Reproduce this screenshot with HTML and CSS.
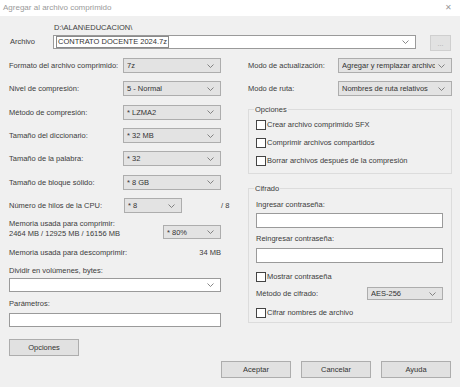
FILE: index.html
```html
<!DOCTYPE html>
<html lang="es">
<head>
    <meta charset="UTF-8">
    <title>Agregar al archivo comprimido</title>
    <link rel="stylesheet" href="styles.css">
</head>
<body>
    <div class="window">
        <div class="titlebar">
            <span class="title">Agregar al archivo comprimido</span>
            <span class="close">✕</span>
        </div>

        <div class="content">
            <!-- archivo -->
            <div class="file-row">
                <span class="file-label">Archivo</span>
                <div class="file-path">
                    <div class="path-text">D:\ALAN\EDUCACION\</div>
                    <div class="combo edit">
                        <span class="value">CONTRATO DOCENTE 2024.7z</span>
                        <svg class="chev" width="7" height="4" viewBox="0 0 7 4"><polyline points="0.5,0.5 3.5,3.5 6.5,0.5"/></svg>
                    </div>
                </div>
                <button class="browse" disabled>...</button>
            </div>

            <div class="columns">
                <!-- columna izquierda -->
                <div class="col-left">
                    <div class="row">
                        <span class="label">Formato del archivo comprimido:</span>
                        <div class="combo sel left-sel"><span class="value">7z</span><svg class="chev" width="7" height="4" viewBox="0 0 7 4"><polyline points="0.5,0.5 3.5,3.5 6.5,0.5"/></svg></div>
                    </div>
                    <div class="row">
                        <span class="label">Nivel de compresión:</span>
                        <div class="combo sel left-sel"><span class="value">5 - Normal</span><svg class="chev" width="7" height="4" viewBox="0 0 7 4"><polyline points="0.5,0.5 3.5,3.5 6.5,0.5"/></svg></div>
                    </div>
                    <div class="row">
                        <span class="label">Método de compresión:</span>
                        <div class="combo sel left-sel"><span class="value">* LZMA2</span><svg class="chev" width="7" height="4" viewBox="0 0 7 4"><polyline points="0.5,0.5 3.5,3.5 6.5,0.5"/></svg></div>
                    </div>
                    <div class="row">
                        <span class="label">Tamaño del diccionario:</span>
                        <div class="combo sel left-sel"><span class="value">* 32 MB</span><svg class="chev" width="7" height="4" viewBox="0 0 7 4"><polyline points="0.5,0.5 3.5,3.5 6.5,0.5"/></svg></div>
                    </div>
                    <div class="row">
                        <span class="label">Tamaño de la palabra:</span>
                        <div class="combo sel left-sel"><span class="value">* 32</span><svg class="chev" width="7" height="4" viewBox="0 0 7 4"><polyline points="0.5,0.5 3.5,3.5 6.5,0.5"/></svg></div>
                    </div>
                    <div class="row">
                        <span class="label">Tamaño de bloque sólido:</span>
                        <div class="combo sel left-sel"><span class="value">* 8 GB</span><svg class="chev" width="7" height="4" viewBox="0 0 7 4"><polyline points="0.5,0.5 3.5,3.5 6.5,0.5"/></svg></div>
                    </div>
                    <div class="row">
                        <span class="label">Número de hilos de la CPU:</span>
                        <div class="combo sel threads-sel"><span class="value">* 8</span><svg class="chev" width="7" height="4" viewBox="0 0 7 4"><polyline points="0.5,0.5 3.5,3.5 6.5,0.5"/></svg></div>
                        <span class="threads-max">/ 8</span>
                    </div>

                    <div class="mem-row">
                        <div class="mem-text">
                            <div>Memoria usada para comprimir:</div>
                            <div>2464 MB / 12925 MB / 16156 MB</div>
                        </div>
                        <div class="combo sel mem-sel"><span class="value">* 80%</span><svg class="chev" width="7" height="4" viewBox="0 0 7 4"><polyline points="0.5,0.5 3.5,3.5 6.5,0.5"/></svg></div>
                    </div>
                    <div class="decomp-row">
                        <span>Memoria usada para descomprimir:</span>
                        <span>34 MB</span>
                    </div>

                    <div class="field-label split-label">Dividir en volúmenes, bytes:</div>
                    <div class="combo edit full"><span class="value"></span><svg class="chev" width="7" height="4" viewBox="0 0 7 4"><polyline points="0.5,0.5 3.5,3.5 6.5,0.5"/></svg></div>

                    <div class="field-label params-label">Parámetros:</div>
                    <div class="textbox params-box"></div>

                    <button class="btn options-btn">Opciones</button>
                </div>

                <!-- columna derecha -->
                <div class="col-right">
                    <div class="row">
                        <span class="label">Modo de actualización:</span>
                        <div class="combo sel right-sel"><span class="value">Agregar y remplazar archivos</span><svg class="chev" width="7" height="4" viewBox="0 0 7 4"><polyline points="0.5,0.5 3.5,3.5 6.5,0.5"/></svg></div>
                    </div>
                    <div class="row">
                        <span class="label">Modo de ruta:</span>
                        <div class="combo sel right-sel"><span class="value">Nombres de ruta relativos</span><svg class="chev" width="7" height="4" viewBox="0 0 7 4"><polyline points="0.5,0.5 3.5,3.5 6.5,0.5"/></svg></div>
                    </div>

                    <fieldset class="group options-group">
                        <legend>Opciones</legend>
                        <div class="check"><span class="box"></span>Crear archivo comprimido SFX</div>
                        <div class="check"><span class="box"></span>Comprimir archivos compartidos</div>
                        <div class="check"><span class="box"></span>Borrar archivos después de la compresión</div>
                    </fieldset>

                    <fieldset class="group cipher-group">
                        <legend>Cifrado</legend>
                        <div class="field-label pw-label">Ingresar contraseña:</div>
                        <div class="textbox pw-box"></div>
                        <div class="field-label pw-label2">Reingresar contraseña:</div>
                        <div class="textbox pw-box2"></div>
                        <div class="check show-pw"><span class="box"></span>Mostrar contraseña</div>
                        <div class="cipher-row">
                            <span class="label">Método de cifrado:</span>
                            <div class="combo sel cipher-sel"><span class="value">AES-256</span><svg class="chev" width="7" height="4" viewBox="0 0 7 4"><polyline points="0.5,0.5 3.5,3.5 6.5,0.5"/></svg></div>
                        </div>
                        <div class="check enc-names"><span class="box"></span>Cifrar nombres de archivo</div>
                    </fieldset>
                </div>
            </div>

            <div class="footer">
                <button class="btn">Aceptar</button>
                <button class="btn">Cancelar</button>
                <button class="btn">Ayuda</button>
            </div>
        </div>
    </div>
</body>
</html>
```

FILE: styles.css
```css
* {
    box-sizing: border-box;
}

body {
    margin: 0;
    background: #f0f0f0;
    font-family: "Liberation Sans", Arial, sans-serif;
    font-size: 7.5px;
    color: #3c3c3c;
}

.window {
    width: 460px;
    height: 387px;
    overflow: hidden;
}

/* barra de titulo */
.titlebar {
    height: 16px;
    background: #fff;
    display: flex;
    align-items: center;
    justify-content: space-between;
    padding: 0 8px 2px 3px;
}

.title {
    font-size: 8px;
    color: #9a9a9a;
}

.close {
    font-size: 8px;
    color: #9a9a9a;
}

.content {
    padding: 0 8px 0 9px;
}

/* fila de archivo */
.file-row {
    display: flex;
    margin-top: 7px;
}

.file-label {
    width: 44px;
    padding-top: 14px;
    padding-left: 1px;
    line-height: 10px;
}

.file-path {
    width: 363px;
}

.path-text {
    line-height: 10px;
    padding-left: 1px;
}

.browse {
    margin: 12px 0 0 14px;
    width: 21px;
    height: 16px;
    padding: 0;
    background: #e2e2e2;
    border: 1px solid #cfcfcf;
    color: #a8a8a8;
    font-size: 7px;
    font-family: inherit;
}

/* combos */
.combo {
    display: flex;
    align-items: center;
    height: 15px;
    padding: 0 6px 0 3px;
    border: 1px solid #adadad;
    white-space: nowrap;
}

.combo .value {
    flex: 1;
    overflow: hidden;
    color: #333;
}

.combo .chev {
    flex: none;
    margin-left: 3px;
}

.chev polyline {
    fill: none;
    stroke: #6a6a6a;
    stroke-width: 0.8;
}

.sel {
    background: #e3e3e3;
}

.edit {
    background: #fff;
    border-color: #9a9a9a;
}

.file-path .edit {
    margin-top: 2px;
    height: 14px;
    padding-left: 2px;
}

.file-path .edit .value {
    border: 1px solid #8a8a8a;
    padding: 0 1px;
    flex: none;
    margin-right: auto;
    line-height: 10px;
}

.textbox {
    background: #fff;
    border: 1px solid #9a9a9a;
    height: 15px;
}

/* columnas */
.columns {
    display: grid;
    grid-template-columns: 212px 204px;
    column-gap: 27px;
    margin-top: 7px;
}

.col-left,
.col-right {
    display: flex;
    flex-direction: column;
}

.row {
    display: flex;
    align-items: center;
    height: 15px;
    margin-bottom: 8.35px;
}

.row .label {
    flex: none;
}

.left-sel {
    margin-left: auto;
    width: 98px;
}

.threads-sel {
    position: static;
    margin-left: auto;
    width: 58px;
    margin-right: 39px;
}

.threads-max {
    width: 0;
    white-space: nowrap;
}

.right-sel {
    margin-left: auto;
    width: 114px;
}

.mem-row {
    display: flex;
    margin-top: -2.35px;
    height: 20px;
}

.mem-text {
    line-height: 10px;
    flex: 1;
}

.mem-sel {
    width: 58px;
    height: 14px;
    margin-top: 6px;
}

.decomp-row {
    display: flex;
    justify-content: space-between;
    line-height: 10px;
    margin-top: 9px;
}

.field-label {
    line-height: 10px;
}

.split-label {
    margin-top: 8px;
}

.full {
    margin-top: 2px;
    height: 14px;
}

.params-label {
    margin-top: 7px;
}

.params-box {
    margin-top: 4px;
    height: 14px;
}

/* botones */
.btn {
    width: 70px;
    height: 17px;
    padding: 0;
    background: #e1e1e1;
    border: 1px solid #adadad;
    font-family: inherit;
    font-size: 7.5px;
    color: #333;
}

.options-btn {
    margin-top: 12px;
}

/* grupos */
.group {
    margin: 0;
    padding: 0 8px 3px 7px;
    border: 1px solid #dcdcdc;
    min-width: 0;
}

.group legend {
    padding: 0 1px;
    margin-left: -2px;
    line-height: 10px;
}

.options-group {
    margin-top: 0.3px;
}

.check {
    display: flex;
    align-items: center;
    height: 18px;
}

.options-group .check:first-of-type {
    margin-top: 1px;
}

.box {
    width: 10px;
    height: 10px;
    border: 1px solid #444;
    background: #fff;
    margin-right: 1px;
}

.cipher-group {
    margin-top: 10px;
    padding-bottom: 2px;
}

.pw-label {
    margin-top: 6px;
}

.pw-box {
    margin-top: 3px;
}

.pw-label2 {
    margin-top: 6px;
}

.pw-box2 {
    margin-top: 4px;
}

.show-pw {
    height: 14px;
    margin-top: 7px;
}

.cipher-row {
    display: flex;
    align-items: center;
    height: 14px;
    margin-top: 3px;
}

.cipher-sel {
    margin-left: auto;
    width: 76px;
    height: 13px;
}

.enc-names {
    height: 14px;
    margin-top: 5px;
}

.footer {
    display: flex;
    justify-content: flex-end;
    gap: 10px;
    margin-top: 5px;
    padding-right: 1px;
}
```
